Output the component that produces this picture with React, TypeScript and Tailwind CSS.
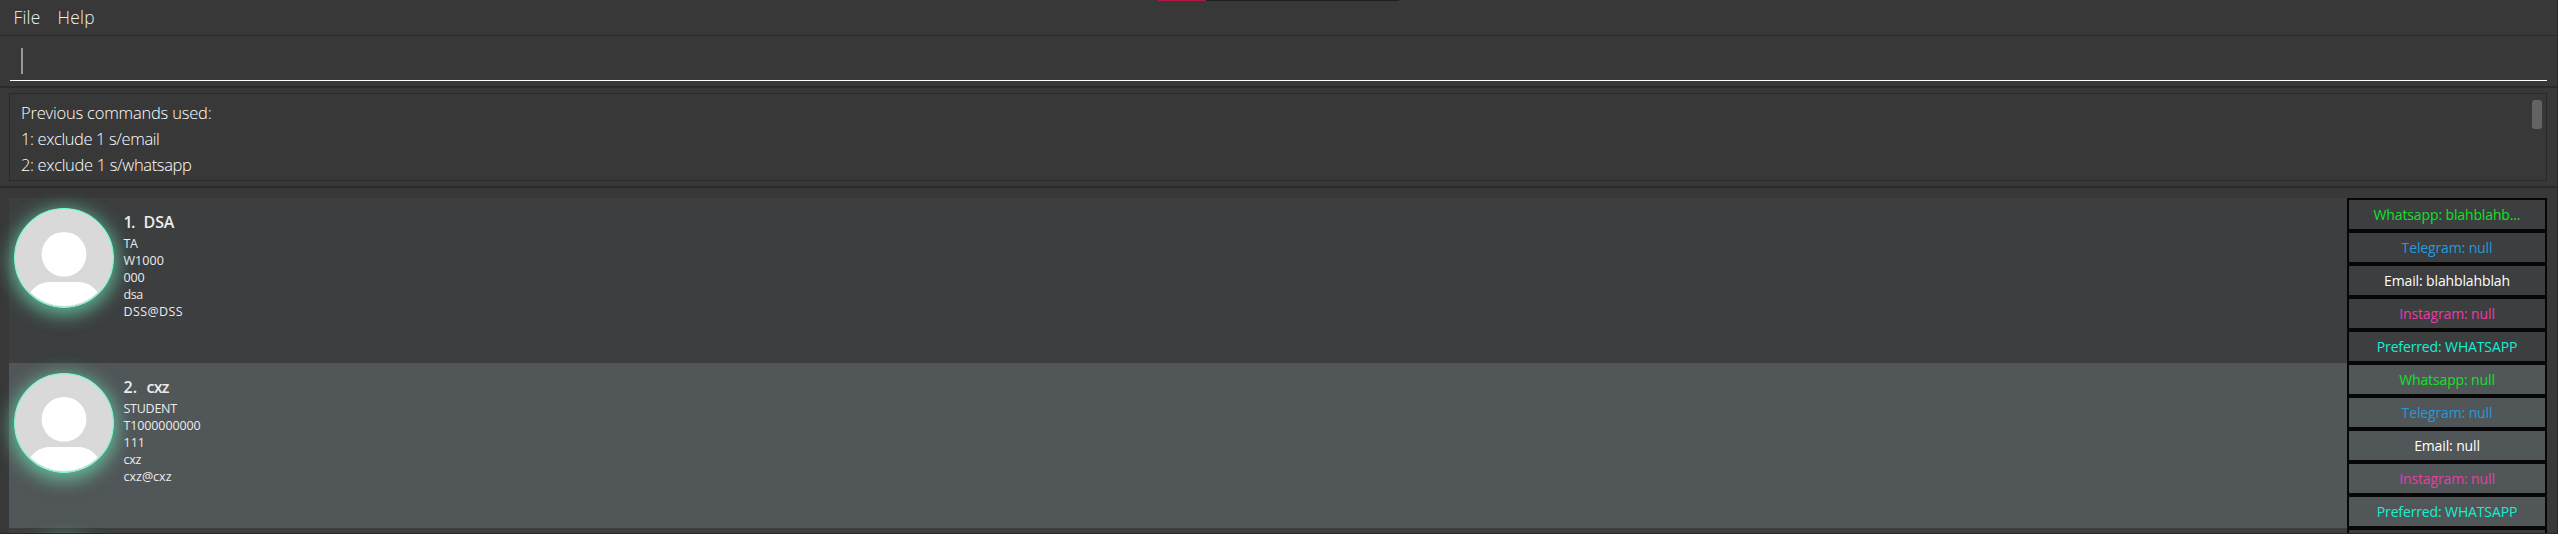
type Line = { text: string; tracking: string };
type Tag = { text: string; className: string };
type Person = {
  id: number;
  index: string;
  indexClass: string;
  name: Line;
  rowClass: string;
  details: Line[];
  tags: Tag[];
};

const WHATSAPP = "text-[#12e02a]";
const TELEGRAM = "text-[#229cdc]";
const EMAIL = "text-[#ffffff]";
const INSTAGRAM = "text-[#e83ca6]";
const PREFERRED = "text-[#12f0d2]";

const people: Person[] = [
  {
    id: 1,
    index: "1.",
    indexClass: "w-[20px] tracking-[-1.6px]",
    name: { text: "DSA", tracking: "tracking-[-0.1px]" },
    rowClass: "bg-[#3c3e3f]",
    details: [
      { text: "TA", tracking: "tracking-[-0.4px]" },
      { text: "W1000", tracking: "tracking-[0.07px]" },
      { text: "000", tracking: "tracking-[-0.2px]" },
      { text: "dsa", tracking: "tracking-[-0.4px]" },
      { text: "DSS@DSS", tracking: "tracking-[0.38px]" },
    ],
    tags: [
      { text: "Whatsapp: blahblahb...", className: WHATSAPP },
      { text: "Telegram: null", className: TELEGRAM },
      { text: "Email: blahblahblah", className: EMAIL },
      { text: "Instagram: null", className: INSTAGRAM },
      { text: "Preferred: WHATSAPP", className: PREFERRED },
    ],
  },
  {
    id: 2,
    index: "2.",
    indexClass: "w-[23px] tracking-[0px]",
    name: { text: "cxz", tracking: "tracking-[-0.8px]" },
    rowClass: "bg-[#515658]",
    details: [
      { text: "STUDENT", tracking: "tracking-[-0.25px]" },
      { text: "T1000000000", tracking: "tracking-[-0.12px]" },
      { text: "111", tracking: "tracking-[0px]" },
      { text: "cxz", tracking: "tracking-[-0.3px]" },
      { text: "cxz@cxz", tracking: "tracking-[0px]" },
    ],
    tags: [
      { text: "Whatsapp: null", className: WHATSAPP },
      { text: "Telegram: null", className: TELEGRAM },
      { text: "Email: null", className: EMAIL },
      { text: "Instagram: null", className: INSTAGRAM },
      { text: "Preferred: WHATSAPP", className: PREFERRED },
    ],
  },
  {
    id: 3,
    index: "",
    indexClass: "",
    name: { text: "", tracking: "" },
    rowClass: "bg-[#3c3e3f]",
    details: [],
    tags: [{ text: "", className: WHATSAPP }],
  },
];

function Avatar({ id }: { id: string }) {
  return (
    <div className="relative mt-[10px] ml-[5px] size-[100px] shrink-0 rounded-full shadow-[0_4px_18px_3px_rgba(110,235,190,0.68)]">
      <svg viewBox="0 0 100 100" className="block size-full">
        <clipPath id={id}>
          <circle cx="50" cy="49.6" r="48.4" />
        </clipPath>
        <circle cx="50" cy="50" r="49.4" fill="#d9d9d9" stroke="#7dfbd0" strokeWidth="1.2" />
        <g clipPath={`url(#${id})`} fill="#ffffff">
          <circle cx="50" cy="46.3" r="22.4" />
          <path d="M12 92 Q20 74 36 74 H64 Q80 74 88 92 V100 H12 Z" />
        </g>
      </svg>
    </div>
  );
}

function PersonRow({ person }: { person: Person }) {
  return (
    <div className={`flex h-[165px] ${person.rowClass}`}>
      <Avatar id={`avatar-${person.id}`} />
      <div className="flex-1 pt-[13px] pl-[9.5px] text-[#ececec]">
        <div className="flex text-[16px] leading-[22px] font-semibold">
          <span className={person.indexClass}>{person.index}</span>
          <span className={person.name.tracking}>{person.name.text}</span>
        </div>
        <div className="mt-[2px] text-[12.5px] leading-[17px]">
          {person.details.map((line, i) => (
            <div key={i} className={line.tracking}>
              {line.text}
            </div>
          ))}
        </div>
      </div>
      <div className="w-[200px] shrink-0">
        {person.tags.map((tag, i) => (
          <div
            key={i}
            className={`h-[33px] border-2 border-[#070707] text-center text-[14px] leading-[29px] tracking-[-0.13px] ${tag.className}`}
          >
            {tag.text}
          </div>
        ))}
      </div>
    </div>
  );
}

export default function App() {
  return (
    <div className="flex h-[534px] w-[2558px] flex-col overflow-hidden border-r border-b border-r-[#2a2a2a] border-b-[#2c282a] bg-[#383838] font-['Open_Sans','Noto_Sans',sans-serif]">
      <div className="relative flex h-[36px] shrink-0 border-b border-[#282828] pl-[13.5px] text-[17.33px] leading-[35px] font-light text-[#f0f0f0]">
        <span className="w-[44px] tracking-[0.2px]">File</span>
        <span className="tracking-[0.3px]">Help</span>
        <div className="absolute top-0 left-[1158px] flex h-px w-[241px] bg-[#1f1f1f]">
          <div className="w-[48px] bg-[#b01a41]" />
        </div>
      </div>

      <div className="h-[52px] shrink-0 border-b-2 border-[#2a2a2a] pr-[10px] pl-[10px]">
        <div className="h-[45px] border-b border-white pt-[12px] pl-[11px]">
          <div className="h-[26px] w-[2px] bg-[#9a9a9a]" />
        </div>
      </div>

      <div className="h-[100px] shrink-0 border-b-2 border-[#2a2a2a] pt-[5px] pr-[10px] pl-[9px]">
        <div className="flex h-[88px] justify-between border border-[#2a2a2a] pt-[5px] pr-[4px] pl-[11px] text-[16.5px] leading-[26px] font-light text-white">
          <div className="pt-[0.5px]">
            <div className="tracking-[-0.2px]">Previous commands used:</div>
            <div className="tracking-[-0.39px]">1: exclude 1 s/email</div>
            <div className="tracking-[-0.34px]">2: exclude 1 s/whatsapp</div>
          </div>
          <div className="mt-px h-[29px] w-[10px] rounded-[3px] bg-[#636363]" />
        </div>
      </div>

      <div className="mt-[10px] mr-[10px] ml-[9px] h-[335px] shrink-0">
        {people.map((person) => (
          <PersonRow key={person.id} person={person} />
        ))}
      </div>
    </div>
  );
}
